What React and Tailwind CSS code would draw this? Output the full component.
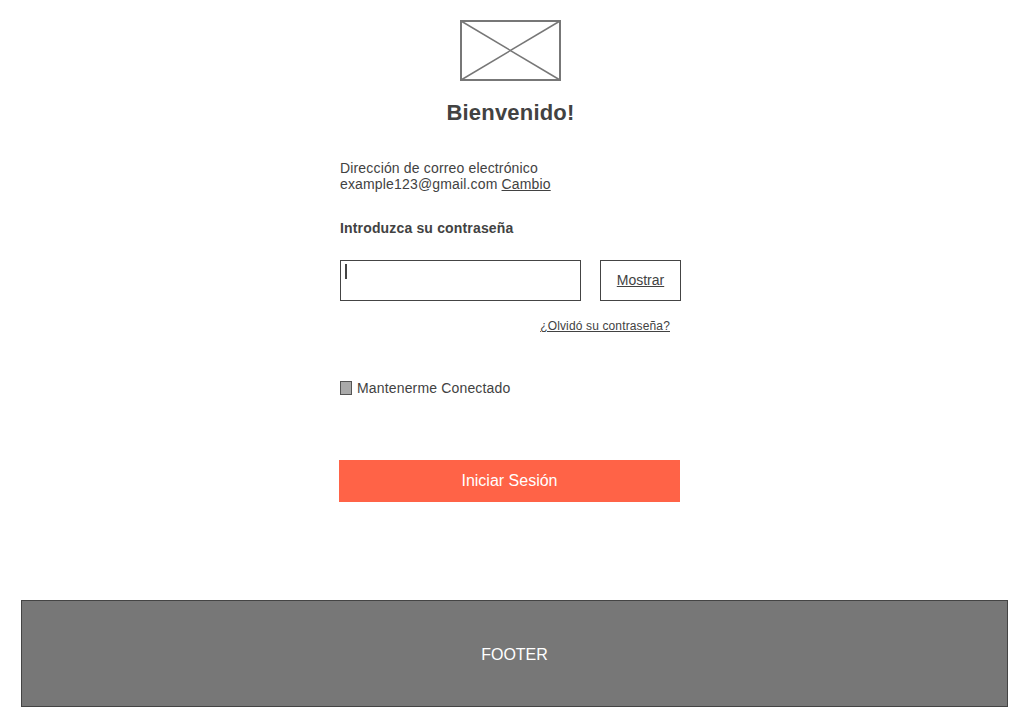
import React from "react";

export default function App() {
  return (
    <div className="min-h-[710px] bg-white text-[#424242]" style={{ fontFamily: '"Liberation Sans", Arial, sans-serif' }}>
      <div className="flex flex-col items-center pt-[20px]">
        <svg width="101" height="61" viewBox="0 0 101 61" className="ml-[-3px]">
          <rect x="1" y="1" width="99" height="59" fill="none" stroke="#777" strokeWidth="2" />
          <line x1="1" y1="1" x2="100" y2="60" stroke="#777" strokeWidth="1.5" />
          <line x1="100" y1="1" x2="1" y2="60" stroke="#777" strokeWidth="1.5" />
        </svg>
        <h1 className="mt-[19px] text-[22px] leading-[26px] font-bold tracking-[0.2px] ml-[-3px]">Bienvenido!</h1>
      </div>
      <div className="ml-[340px] w-[341px]">
        <div className="mt-[34px] text-[14px] leading-[16px] tracking-[0.16px]">
          <div>Dirección de correo electrónico</div>
          <div>
            example123@gmail.com <a className="underline">Cambio</a>
          </div>
        </div>
        <div className="mt-[28px] text-[14px] leading-[16px] font-bold tracking-[0.16px]">Introduzca su contraseña</div>
        <div className="mt-[24px] flex gap-[19px]">
          <div className="w-[241px] h-[41px] border border-[#444] relative">
            <div className="absolute left-[4px] top-[3px] w-[2px] h-[15px] bg-[#444]"></div>
          </div>
          <div className="w-[81px] h-[41px] border border-[#444] flex items-center justify-center text-[14px] underline">
            Mostrar
          </div>
        </div>
        <div className="mt-[18px] text-right pr-[11px] text-[12px] leading-[14px] tracking-[0.14px]">
          <a className="underline">¿Olvidó su contraseña?</a>
        </div>
        <div className="mt-[47px] flex items-center h-[16px] text-[14px] leading-[16px] tracking-[0.16px]">
          <div className="w-[12px] h-[14px] bg-[#aaa] border border-[#555]"></div>
          <span className="ml-[5px]">Mantenerme Conectado</span>
        </div>
        <div className="mt-[64px] ml-[-1px] w-[341px] h-[42px] bg-[#ff6347] text-white text-[16px] flex items-center justify-center">
          Iniciar Sesión
        </div>
      </div>
      <div className="mt-[98px] ml-[21px] w-[987px] h-[107px] pt-[3px] bg-[#777] border border-[#444] flex items-center justify-center text-white text-[16px]">
        FOOTER
      </div>
    </div>
  );
}
